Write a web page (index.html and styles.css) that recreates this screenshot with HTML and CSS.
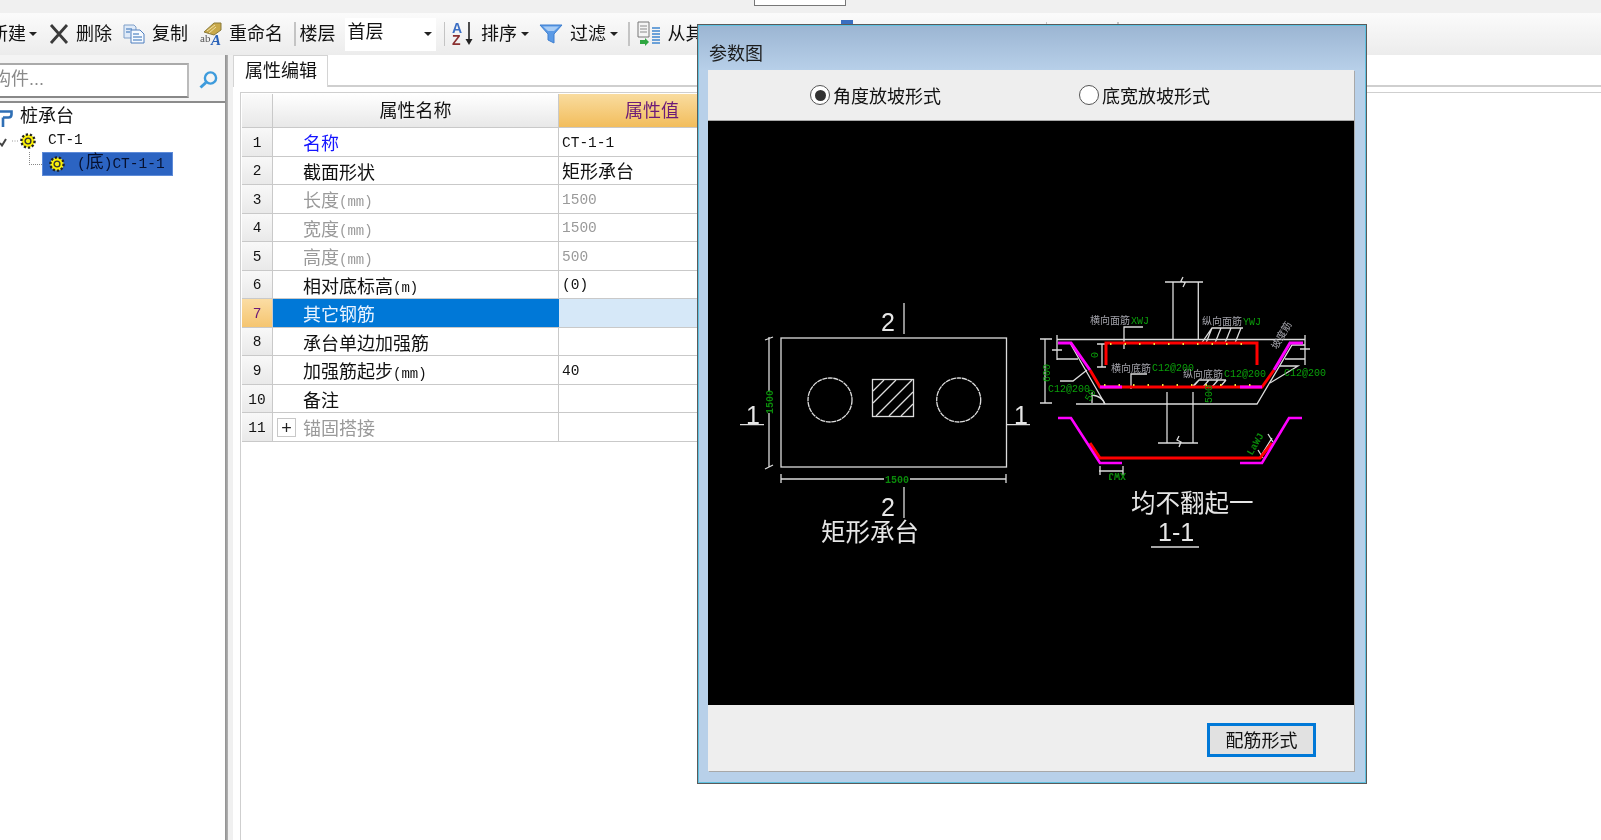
FILE: index.html
```html
<!DOCTYPE html>
<html lang="zh">
<head>
<meta charset="utf-8">
<title>参数图</title>
<link rel="stylesheet" href="styles.css">
</head>
<body>
<svg class="defs" width="0" height="0">
  <symbol id="gear" viewBox="0 0 16 16">
    <circle cx="8" cy="8" r="6.600" fill="#f5ee10" stroke="#222" stroke-width="2.400" stroke-dasharray="2.200 1.900"/>
    <circle cx="8" cy="8" r="5" fill="#fff200"/>
    <circle cx="8" cy="8" r="2.900" fill="#f5ee10" stroke="#333" stroke-width="1.400"/>
  </symbol>
</svg>
<div class="screen">
  <div class="topstrip"><div class="topbox"></div></div>

  <div class="toolbar">
    <div class="tool first"><span>新建</span><i class="caret"></i></div>
    <div class="tool">
      <svg class="ic" width="20" height="22" viewBox="0 0 20 22"><path d="M2 2 18 20M18 2 2 20" stroke="#3a3a3a" stroke-width="2.800" fill="none"/></svg>
      <span>删除</span>
    </div>
    <div class="tool">
      <svg class="ic" width="22" height="20" viewBox="0 0 22 20"><path d="M1 1h10l2 2v11H1z" fill="#dfeaf8" stroke="#7f9fc8"/><path d="M8 6h9l4 4v9H8z" fill="#f6faff" stroke="#4f7fbe"/><path d="M10 10h6M10 13h9M10 16h9M3 5h6M3 8h4" stroke="#2f6db5"/></svg>
      <span>复制</span>
    </div>
    <div class="tool tool-rename">
      <svg class="ic" width="23" height="24" viewBox="0 0 23 24"><path d="M4 10 14 1h7v7l-7 5z" fill="#c9a94a" stroke="#8a7a3a"/><path d="M7 9 15 3M9 11l7-6" stroke="#f1e2a8"/><text x="0" y="20" class="ic-ab">ab</text><text x="11" y="23" class="ic-a">A</text></svg>
      <span>重命名</span>
    </div>
    <i class="sep"></i>
    <span class="floor-label">楼层</span>
    <div class="select"><span>首层</span><i class="caret"></i></div>
    <i class="sep sep-tight"></i>
    <div class="tool tool-sort">
      <svg class="ic" width="23" height="24" viewBox="0 0 23 24"><text x="0" y="11" class="ic-az-a">A</text><text x="0" y="23" class="ic-az-z">Z</text><path d="M17 0v21" stroke="#222" stroke-width="1.600"/><path d="M13.500 17 17 23l3.500-6z" fill="#222"/></svg>
      <span>排序</span><i class="caret"></i>
    </div>
    <div class="tool tool-filter">
      <svg class="ic" width="22" height="20" viewBox="0 0 22 20"><path d="M0 1h22L14 10v9l-6-3v-6z" fill="#5a9ae6" stroke="#3e7fcf"/><path d="M3 2.500h16L14 7H8z" fill="#a9cdf5"/></svg>
      <span>过滤</span><i class="caret"></i>
    </div>
    <i class="sep sep-last"></i>
    <div class="tool">
      <svg class="ic" width="24" height="26" viewBox="0 0 24 26"><path d="M1 1h11v15H1z" fill="#f4f4f4" stroke="#777"/><path d="M3 5h7M3 8h7M3 11h7" stroke="#8a8a8a"/><path d="M3 19h5v-2l4 4-4 4v-2H3z" fill="#2fa640"/><path d="M15 7h8M15 10h8M15 13h8M15 16h8M15 19h8M15 22h8" stroke="#3f86cf" stroke-width="1.600"/></svg>
      <span>从其它楼层复制构件</span>
    </div>
    <svg class="peek" width="12" height="5" viewBox="0 0 12 5"><path d="M0 0h12v5H0z" fill="#3a6fc0"/></svg>
    <i class="sep sep-a"></i>
    <i class="sep sep-b"></i>
  </div>

  <div class="main">
    <aside class="side">
      <div class="searchrow">
        <div class="searchbox">构件...</div>
        <div class="searchbtn">
          <svg width="21" height="18" viewBox="0 0 21 18"><circle cx="12.500" cy="7" r="5.600" fill="none" stroke="#3d9bdc" stroke-width="2.400"/><path d="M8 11.500 2.500 16.500" stroke="#3d9bdc" stroke-width="3"/></svg>
        </div>
      </div>
      <div class="tree">
        <div class="tree-row root">
          <svg width="13" height="18" viewBox="0 0 13 18"><path d="M0 2.500h11.500v3q0 3-3 3H3M3 8.500V18" fill="none" stroke="#2f6fb5" stroke-width="2.600"/></svg>
          <span>桩承台</span>
        </div>
        <div class="tree-row node">
          <svg class="chev" width="18" height="12" viewBox="0 0 18 12"><path d="M0 8 2 10.500 6 4" fill="none" stroke="#444" stroke-width="2"/><path d="M12 6h6" stroke="#999" stroke-dasharray="1 1.500"/></svg>
          <svg class="gear" width="16" height="16"><use href="#gear"/></svg>
          <span>CT-1</span>
        </div>
        <div class="tree-row leaf">
          <i class="dots"></i>
          <div class="selected">
            <svg class="gear" width="16" height="16"><use href="#gear"/></svg>
            <span>(<b class="zh">底</b>)CT-1-1</span>
          </div>
        </div>
      </div>
    </aside>
    <div class="splitter"></div>
    <section class="content">
      <div class="tabs"><div class="tab">属性编辑</div></div>
      <div class="grid">
        <div class="row head">
          <div class="num"></div>
          <div class="name">属性名称</div>
          <div class="val">属性值</div>
        </div>
        <div class="row"><div class="num">1</div><div class="name blue">名称</div><div class="val">CT-1-1</div></div>
        <div class="row"><div class="num">2</div><div class="name">截面形状</div><div class="val zhval">矩形承台</div></div>
        <div class="row muted"><div class="num">3</div><div class="name">长度<span class="unit">(mm)</span></div><div class="val">1500</div></div>
        <div class="row muted"><div class="num">4</div><div class="name">宽度<span class="unit">(mm)</span></div><div class="val">1500</div></div>
        <div class="row muted"><div class="num">5</div><div class="name">高度<span class="unit">(mm)</span></div><div class="val">500</div></div>
        <div class="row"><div class="num">6</div><div class="name">相对底标高<span class="unit">(m)</span></div><div class="val">(0)</div></div>
        <div class="row active"><div class="num">7</div><div class="name">其它钢筋</div><div class="val"></div></div>
        <div class="row"><div class="num">8</div><div class="name">承台单边加强筋</div><div class="val"></div></div>
        <div class="row"><div class="num">9</div><div class="name">加强筋起步<span class="unit">(mm)</span></div><div class="val">40</div></div>
        <div class="row"><div class="num">10</div><div class="name">备注</div><div class="val"></div></div>
        <div class="row group"><div class="num">11</div><div class="name"><i class="plus">+</i>锚固搭接</div><div class="val"></div></div>
      </div>
    </section>
  </div>

  <div class="dialog">
    <div class="dialog-title">参数图</div>
    <div class="dialog-body">
      <div class="radios">
        <div class="radio on"><i class="dot"></i><span>角度放坡形式</span></div>
        <div class="radio"><i class="dot"></i><span>底宽放坡形式</span></div>
      </div>
      <svg class="cad" width="646" height="584" viewBox="708 121 646 584">
        <rect x="708" y="121" width="646" height="584" fill="#000"/>
        <g fill="none" stroke="#dcdcdc" stroke-width="1.300">
          <!-- plan -->
          <rect x="781" y="338" width="225.500" height="129"/>
          <circle cx="830" cy="400" r="22" stroke-dasharray="5 .6"/>
          <circle cx="958.700" cy="400" r="22" stroke-dasharray="5 .6"/>
          <rect x="872.500" y="379.500" width="41" height="37"/>
          <path d="M873 391 884 380M873 403 896 380M876 416 912 380M889 416 913 392M901 416 913 404"/>
          <path d="M904 303v31M904 487v31M740 424.700h24M1007 424.700h23"/>
          <path d="M769 337v54M769 413v54M765 340l8-3M765 469l8-4"/>
          <path d="M781 479h103M910 479h96M781 474v9M1006 474v9"/>
          <!-- section: foundation -->
          <path d="M1170 282h33M1165 282h7M1173 282v58M1198.300 282v58M1183 277l-2 4 4 2-2 4"/>
          <path d="M1057 339.500h248" stroke-width="1.500"/>
          <path d="M1070 343 1105 404M1076 404H1257L1292 345h13"/>
          <path d="M1167 392v51M1193 392v51M1158 443h40M1179 436l-2 4 4 2-2 5"/>
          <path d="M1045 339v64M1040 339h12M1040 403h12M1057 335v25M1057 359h21M1052 350h10"/>
          <path d="M1102 344v23M1097 344h9M1097 367h9"/>
          <path d="M1060 381h13l14-11M1092 392v11M1092 395q10 1 13 9"/>
          <path d="M1305 335v30M1285 359h20M1300 349h10M1280 366h18l-28 17"/>
          <path d="M1124 349v-22h19M1131 389v-15h16"/>
          <path d="M1201 344l11-16h31M1212 328l-6 15M1221 328l-6 15M1231 328l-6 15M1241 328l-6 15"/>
          <path d="M1192 387l7-7h27M1199 380l-6 7M1209 380l-6 7M1218 380l-6 7M1226 380l-6 7"/>
          <path d="M1262 454l10-16M1258 450l5 8M1268 434l5 8M1099 471h24M1100 466v9M1123 466v9"/>
          <path d="M1151 547h48"/>
        </g>
        <g fill="none" stroke="#ff0000" stroke-width="3">
          <path d="M1106 365V343H1257V365"/>
          <path d="M1090 370 1100 387H1262L1274 370"/>
          <path d="M1090 443 1100 458H1260L1272 443"/>
        </g>
        <g fill="none" stroke="#ff00ff" stroke-width="3">
          <path d="M1058 343h13l19 27M1100 387h22M1240 387h22M1274 370 1290 343h13"/>
          <path d="M1058 418h13l29 45h22M1240 463h22l27-45h13" stroke-width="2.600"/>
        </g>
        <g fill="none" stroke="#f0e040" stroke-width="2" stroke-dasharray="1.500 13">
          <path d="M1110 344H1255"/>
          <path d="M1104 385H1260"/>
        </g>
        <g class="cad-green">
          <text x="1131" y="324">XWJ</text>
          <text x="1243" y="325">YWJ</text>
          <text x="1152" y="371">C12@200</text>
          <text x="1224" y="377">C12@200</text>
          <text x="1284" y="376">C12@200</text>
          <text x="1048" y="392">C12@200</text>
          <text x="885" y="483" class="g-small">1500</text>
          <text transform="translate(773 414) rotate(-90)" class="g-small">1500</text>
          <text transform="translate(1050 382) rotate(-90)">600</text>
          <text transform="translate(1098 358) rotate(-90)">0</text>
          <text transform="translate(1090 402) rotate(-60)">50</text>
          <text transform="translate(1212 403) rotate(-90)">500</text>
          <text transform="translate(1252 456) rotate(-60)" class="g-small">LaWJ</text>
          <text transform="translate(1126 473) rotate(180)" class="g-small">XWJ</text>
        </g>
        <g class="cad-grey">
          <text x="1090" y="324">横向面筋</text>
          <text x="1202" y="325">纵向面筋</text>
          <text x="1111" y="372">横向底筋</text>
          <text x="1183" y="378">纵向底筋</text>
          <text transform="translate(1277 350) rotate(-60)">坡度筋</text>
        </g>
        <g class="cad-white">
          <text x="881" y="331">2</text>
          <text x="881" y="516">2</text>
          <text x="746" y="424">1</text>
          <text x="1014" y="424">1</text>
          <text x="1158" y="541">1-1</text>
          <text x="821" y="541" class="cad-title">矩形承台</text>
          <text x="1131" y="512" class="cad-title">均不翻起一</text>
        </g>
      </svg>
      <div class="dialog-foot"><button class="btn" type="button">配筋形式</button></div>
    </div>
  </div>
</div>
</body>
</html>
```

FILE: styles.css
```css
* { box-sizing: border-box; }
html, body { margin: 0; height: 100%; overflow: hidden; background: #fff; }
.defs { position: absolute; }
i { font-style: normal; }
b { font-weight: normal; }

.screen {
  position: relative;
  width: 1601px;
  height: 840px;
  overflow: hidden;
  display: flex;
  flex-direction: column;
  font: 18px/1.2 "Liberation Mono", "Noto Sans CJK SC", monospace;
  color: #111;
  filter: blur(.45px);
}

.topstrip { height: 13px; background: #f0f0f0; flex: none; }
.topbox { width: 92px; height: 6px; margin-left: 754px; background: #fff; border: 1px solid #777; border-top: 0; }

.toolbar {
  height: 42px;
  flex: none;
  display: flex;
  align-items: center;
  gap: 11px;
  background: linear-gradient(#fbfbfb, #ececec);
  white-space: nowrap;
}
.tool { display: flex; align-items: center; gap: 7px; flex: none; }
.tool span, .floor-label { padding-top: 4px; }
.tool.first { margin-left: -10px; gap: 3px; margin-right: 1px; }
.tool-rename { margin-left: 1px; gap: 6px; }
.tool-sort { gap: 6px; }
.tool-sort .caret { margin-left: -2px; }
.tool-filter { gap: 8px; }
.tool-filter .caret { margin-left: -4px; }
.ic { flex: none; overflow: visible; }
.caret { width: 0; height: 0; border: 4px solid transparent; border-top: 4px solid #222; border-bottom: 0; flex: none; }
.sep { width: 1.500px; height: 24px; background: #c4c4c4; flex: none; }
.sep-tight { margin-right: -4px; }
.sep-last { margin: 0 -4px 0 -1px; }
.floor-label { margin-left: -7px; margin-right: -2px; }
.select {
  width: 91px;
  height: 33px;
  margin-right: -3px;
  padding: 0 4px 0 3px;
  background: #fff;
  display: flex;
  align-items: center;
  justify-content: space-between;
}
.peek { align-self: flex-start; margin: 7px 0 0; flex: none; }
.sep-a { margin-left: 182px; }
.sep-b { margin-left: 59px; }

.ic-ab { font: 11px "Liberation Serif", serif; fill: #555; }
.ic-a { font: italic bold 15px "Liberation Serif", serif; fill: #2a62b8; }
.ic-az-a { font: bold 14px "Liberation Sans", sans-serif; fill: #3c6fc4; }
.ic-az-z { font: bold 14px "Liberation Sans", sans-serif; fill: #8a3030; }

.main { flex: 1; display: flex; min-height: 0; }
.side { width: 225px; flex: none; padding-top: 8px; background: #f4f4f4; display: flex; flex-direction: column; }
.searchrow { height: 35px; display: flex; flex: none; margin-bottom: 3px; }
.searchbox {
  width: 209px;
  margin-left: -20px;
  padding: 4px 0 0 11px;
  background: #fff;
  border: 2px solid #888;
  border-top-color: #aaa;
  border-right-color: #bbb;
  color: #8a8a8a;
  font-family: "Liberation Sans", "Noto Sans CJK SC", sans-serif;
  overflow: hidden;
  white-space: nowrap;
}
.searchbtn { flex: 1; display: flex; align-items: center; justify-content: center; padding: 0 0 2px 2px; }
.tree { flex: 1; background: #fff; border-top: 2px solid #8c8c8c; padding-top: 2px; }
.tree-row { display: flex; align-items: center; }
.tree-row.root { height: 25px; gap: 7px; }
.node { height: 22px; font-size: 14.500px; }
.node .chev { flex: none; }
.node .gear { margin: 0 0 0 2px; }
.node span { margin-left: 12px; }
.leaf { height: 24px; position: relative; font-size: 14.500px; padding-left: 29px; }
.dots { width: 13px; height: 13px; margin-top: -12px; border-left: 1px dotted #888; border-bottom: 1px dotted #888; flex: none; }
.selected { width: 131px; height: 24px; background: #2c64c2; border: 1px solid #5e8bd8; display: flex; align-items: center; padding-left: 6px; color: #06102e; }
.selected span { margin-left: 12px; white-space: nowrap; font-size: 14.500px; }
.zh { font-size: 18px; }

.splitter { width: 3px; flex: none; background: linear-gradient(90deg, #8f8f8f, #b4b4b4); }
.content { flex: 1; min-width: 0; display: flex; flex-direction: column; background: #fff; padding-left: 5px; box-shadow: inset 5px 0 0 #f0f0f0; }
.tabs { height: 32px; flex: none; border-bottom: 2px solid #cfcfcf; display: flex; }
.tab { width: 95px; height: 32px; padding: 6px 0 0 11px; background: #fff; border: 1px solid #d4d4d4; border-bottom: 0; }
.grid { flex: 1; margin: 5px 0 0 7px; padding: 1px; border-left: 1.500px solid #cfcfcf; border-top: 1px solid #cfcfcf; }
.row { display: grid; grid-template-columns: 31px 286px 186px; width: 503px; height: 28.550px; border-bottom: 1.500px solid #c9c9c9; }
.row > div { display: flex; align-items: center; white-space: nowrap; overflow: hidden; }
.num { justify-content: center; padding-top: 3px; font-size: 14.500px; background: linear-gradient(#f8f8f8, #e9e9e9); border-right: 1.500px solid #c9c9c9; }
.name { padding: 8px 0 0 30px; border-right: 1.500px solid #c9c9c9; }
.val { padding: 3px 0 0 3px; font-size: 14.500px; }
.unit { font-size: 14px; }
.head { height: 34px; }
.head .name { justify-content: center; padding: 5px 0 0; background: linear-gradient(#fff, #e8e8e8); }
.head .val { justify-content: center; padding: 5px 0 0; font-size: 18px; color: #6c1a78; background: linear-gradient(#f9dc9f, #f2bd5c); }
.head .num { background: linear-gradient(#fbfbfb, #e8e8e8); }
.val.zhval { font-size: 18px; padding-top: 6px; }
.blue { color: #1414ff; }
.muted, .group .name { color: #9a9a9a; }
.muted .num, .group .num { color: #111; }
.active .num { background: linear-gradient(#fbdda4, #f5c570); color: #6c1a78; }
.active .name { background: #0078d7; color: #eaf4ff; border-right: 0; }
.active .val { background: #d6e8f8; }
.group .name { padding-left: 4px; }
.plus { width: 19px; height: 19px; margin: -7px 7px 0 0; border: 1.500px solid #c8c8c8; display: flex; align-items: center; justify-content: center; font: 18px/1 "Liberation Sans", sans-serif; color: #222; }

.dialog {
  position: absolute;
  left: 697px;
  top: 24px;
  width: 670px;
  height: 760px;
  padding: 0 12px 12px 10px;
  display: flex;
  flex-direction: column;
  background: #b8cfe8;
  background-image: linear-gradient(#9bb5d2, #b8d0e9 46px);
  border: 1px solid #5a5a5a;
  box-shadow: inset 0 0 0 1px #5fc1e0;
}
.dialog-title { height: 45px; flex: none; padding: 19px 0 0 1px; line-height: 22px; color: #1c1c1c; }
.dialog-body { flex: 1; display: flex; flex-direction: column; background: #eee; box-shadow: 1px 1px 0 #a8a8a8; min-height: 0; }
.radios { height: 51px; flex: none; display: flex; align-items: center; gap: 138px; padding-left: 102px; border-bottom: 1px solid #a8a8a8; }
.radio { display: flex; align-items: center; gap: 3px; }
.radio span { padding-top: 7px; }
.dot { width: 20px; height: 20px; border-radius: 50%; background: #fff; border: 1.500px solid #555; flex: none; display: flex; align-items: center; justify-content: center; }
.radio.on .dot::after { content: ""; width: 11px; height: 11px; border-radius: 50%; background: #333; }
.cad { display: block; flex: none; }
.cad-green text { font: 10px "Liberation Mono", monospace; fill: #0aa00a; }
.cad-green text.g-small { font-size: 10px; fill: #0b8a0b; font-weight: bold; }
.cad-grey text { font: 10px "Noto Sans CJK SC", sans-serif; fill: #a0a0a8; }
.cad-white text { font: 25px "Liberation Sans", sans-serif; fill: #e6e6e6; }
.cad-white text.cad-title { font: 24.500px "Noto Sans CJK SC", sans-serif; }
.dialog-foot { flex: 1; display: flex; justify-content: flex-end; align-items: flex-start; padding: 18px 38px 0 0; }
.btn { width: 109px; height: 34px; padding: 6px 0 0; background: #e1e1e1; border: 3px solid #0078d7; font: inherit; color: #111; }
```
